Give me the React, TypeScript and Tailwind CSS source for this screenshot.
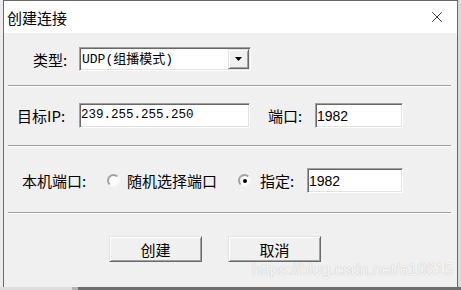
import { X } from "lucide-react";

const cjk = "font-['Noto_Sans_CJK_SC',sans-serif]";
const mono = "font-['Liberation_Mono','Noto_Sans_CJK_SC',monospace]";
const sans = "font-['Liberation_Sans','Noto_Sans_CJK_SC',sans-serif]";

const sunken =
    "bg-white border border-t-[#a0a0a0] border-l-[#a0a0a0] border-b-white border-r-white shadow-[inset_1px_1px_0_#696969,inset_-1px_-1px_0_#e3e3e3]";
const raised =
    "bg-[#f0f0f0] border border-t-[#e3e3e3] border-l-[#e3e3e3] border-b-[#696969] border-r-[#696969] shadow-[inset_1px_1px_0_#ffffff,inset_-1px_-1px_0_#a0a0a0]";

function Separator() {
    return <div className="ml-[4px] w-[443px] h-[2px] border-t border-[#a0a0a0] border-b border-b-white" />;
}

function Radio({ checked }: { checked?: boolean }) {
    return (
        <div className="w-[13px] h-[13px] rounded-full bg-white border-2 border-t-[#a0a0a0] border-l-[#a0a0a0] border-b-[#f7f7f7] border-r-[#f7f7f7] flex items-center justify-center">
            {checked && <div className="w-[4px] h-[4px] rounded-full bg-black" />}
        </div>
    );
}

function Button({ label }: { label: string }) {
    return (
        <div className={`${raised} w-[93px] h-[26px] flex items-center justify-center text-[15px] leading-none ${cjk}`}>
            {label}
        </div>
    );
}

export default function App() {
    return (
        <div className="w-[461px] h-[290px] overflow-hidden bg-[#ececec] flex flex-col relative">
            <div className="flex h-[287px]">
                <div className="w-[3px] bg-[#ececec]" />
                <div className="w-[455px] flex flex-col border-t border-l border-r border-[#6a6a6a]">
                    {/* title bar */}
                    <div className="h-[32px] bg-white flex items-center justify-between pl-[3px] pr-[11px]">
                        <span className={`text-[15px] leading-none text-black ${cjk}`}>创建连接</span>
                        <X className="w-[18px] h-[18px] text-black" strokeWidth={1} />
                    </div>

                    {/* body */}
                    <div className="flex-1 bg-[#f0f0f0] flex flex-col text-black">
                        <div className="mt-[14px] h-[24px] flex items-center pl-[29px]">
                            <span className={`w-[46px] text-[15px] leading-none ${cjk}`}>类型:</span>
                            <div className={`${sunken} w-[172px] h-[24px] flex items-center justify-between pl-[2px] pr-[1px]`}>
                                <span className={`text-[13px] leading-none ${mono}`}>UDP(组播模式)</span>
                                <div className={`${raised} w-[21px] h-[20px] flex items-center justify-center`}>
                                    <svg width="8" height="4" viewBox="0 0 8 4">
                                        <path d="M0 0h7L3.5 4z" fill="#000" />
                                    </svg>
                                </div>
                            </div>
                        </div>

                        <div className="mt-[14px]">
                            <Separator />
                        </div>

                        <div className="mt-[16px] h-[25px] flex items-center pl-[13px]">
                            <span className={`w-[62px] text-[15px] leading-none ${cjk}`}>目标IP:</span>
                            <div className={`${sunken} w-[171px] h-[25px] flex items-center pl-[1px]`}>
                                <span className={`text-[12.5px] leading-none ${mono}`}>239.255.255.250</span>
                            </div>
                            <span className={`ml-[18px] w-[47px] text-[15px] leading-none ${cjk}`}>端口:</span>
                            <div className={`${sunken} w-[88px] h-[25px] flex items-center pl-[1px]`}>
                                <span className={`text-[14px] leading-none ${sans}`}>1982</span>
                            </div>
                        </div>

                        <div className="mt-[17px]">
                            <Separator />
                        </div>

                        <div className="mt-[21px] h-[25px] flex items-center pl-[18px]">
                            <span className={`w-[85px] text-[15px] leading-none ${cjk}`}>本机端口:</span>
                            <Radio />
                            <span className={`ml-[7px] w-[111px] text-[15px] leading-none ${cjk}`}>随机选择端口</span>
                            <Radio checked />
                            <span className={`ml-[9px] w-[47px] text-[15px] leading-none ${cjk}`}>指定:</span>
                            <div className={`${sunken} w-[96px] h-[25px] flex items-center pl-[1px]`}>
                                <span className={`text-[14px] leading-none ${sans}`}>1982</span>
                            </div>
                        </div>

                        <div className="mt-[19px]">
                            <Separator />
                        </div>

                        <div className="mt-[22px] flex items-center gap-[26px] pl-[105px]">
                            <Button label="创建" />
                            <Button label="取消" />
                        </div>
                    </div>
                </div>
                <div className="flex-1 bg-[#dadada]" />
            </div>
            <div className="h-[3px] flex">
                <div className="w-[72px] bg-[#dedede]" />
                <div className="w-[6px] bg-[#b4b4b4]" />
                <div className="flex-1 bg-[#6e6e6e]" />
            </div>

            {/* watermark */}
            <span
                className={`absolute left-[252px] top-[262px] text-[16px] leading-none text-[#f6f6f6] [text-shadow:0_0_1px_#b0b0b0] ${sans}`}
            >
                https://blog.csdn.net/a10615
            </span>
        </div>
    );
}
